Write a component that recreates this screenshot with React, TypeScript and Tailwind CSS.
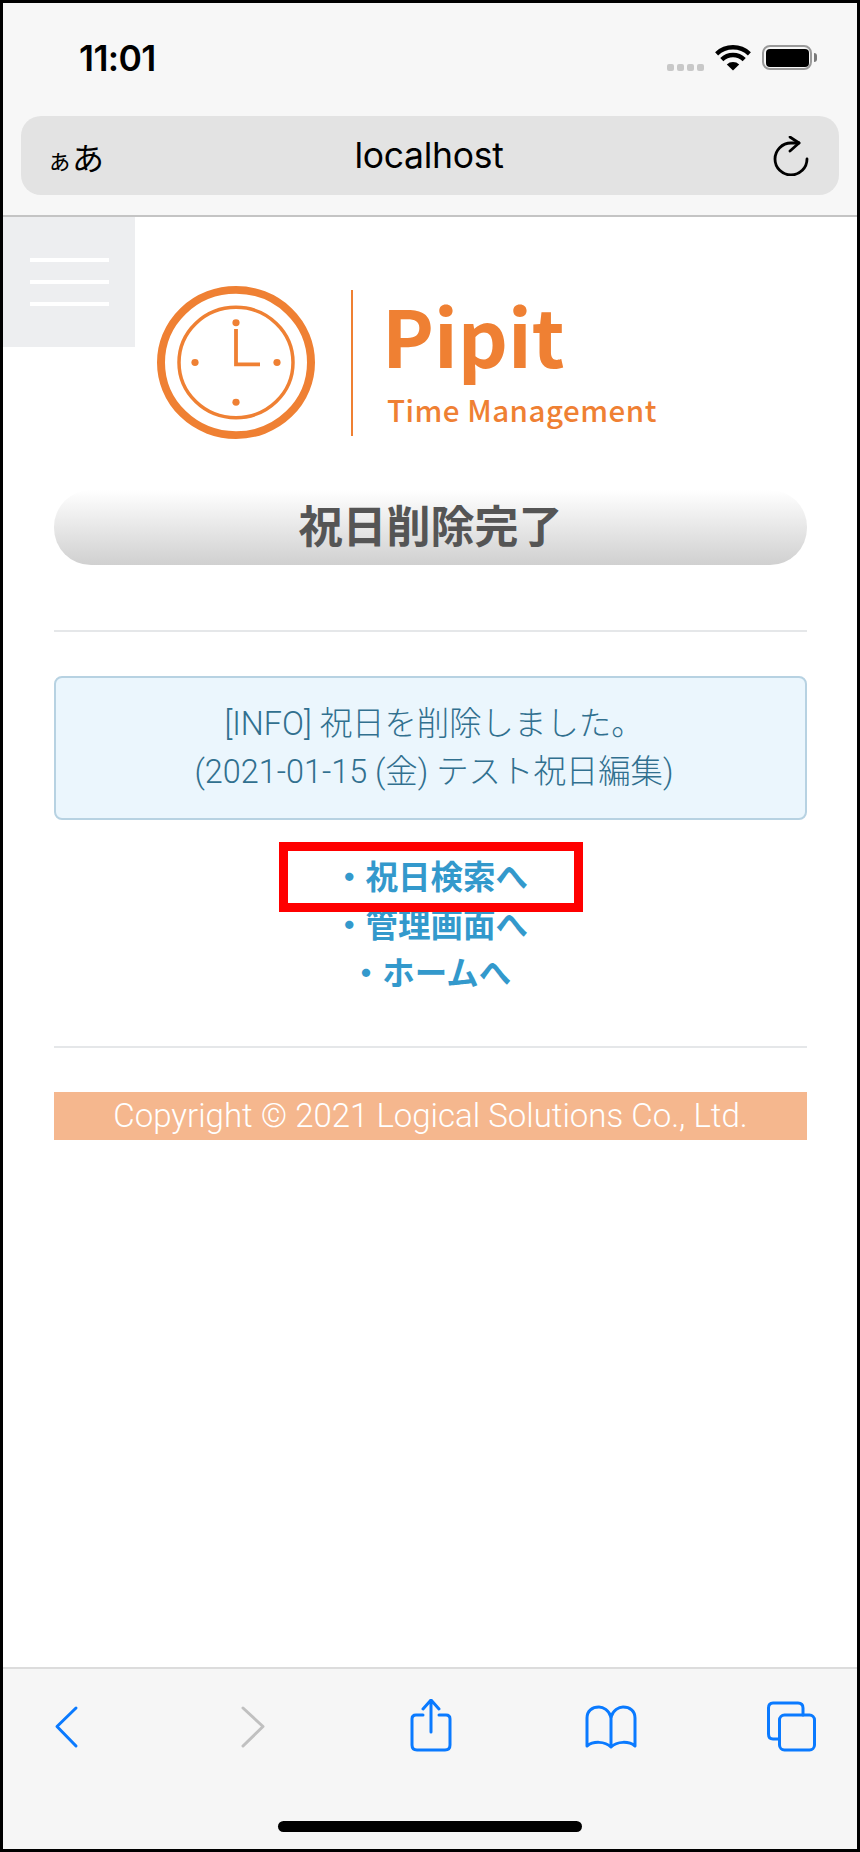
import React from "react";

const cjk = "font-['Liberation_Sans','Noto_Sans_CJK_JP',sans-serif]";
const thin = "font-['Roboto','Noto_Sans_CJK_JP',sans-serif] font-light";

function ClockLogo() {
  return (
    <svg width="158" height="153" viewBox="0 0 158 158" preserveAspectRatio="none" fill="none" stroke="#ef8033" className="shrink-0">
      <circle cx="79" cy="79" r="75" strokeWidth="8" />
      <circle cx="79" cy="79" r="57" strokeWidth="3.5" />
      <circle cx="79" cy="38" r="3.6" fill="#ef8033" stroke="none" />
      <circle cx="79" cy="120" r="3.6" fill="#ef8033" stroke="none" />
      <circle cx="38" cy="79" r="3.6" fill="#ef8033" stroke="none" />
      <circle cx="120" cy="79" r="3.6" fill="#ef8033" stroke="none" />
      <path d="M79 44.5V81H103" strokeWidth="3.8" />
    </svg>
  );
}

function StatusBar() {
  return (
    <div className="flex h-[113px] items-start justify-between pl-[76px] pr-[40px]">
      <span className="mt-[36px] font-['Inter',sans-serif] text-[35.5px] leading-[40px] font-semibold tracking-[-0.6px] text-black">11:01</span>
      <div className="mt-[42px] flex items-start">
        <div className="mt-[19px] flex gap-[3px]">
          <span className="h-[7px] w-[7px] rounded-[2px] bg-[#c8c8c8]" />
          <span className="h-[7px] w-[7px] rounded-[2px] bg-[#c8c8c8]" />
          <span className="h-[7px] w-[7px] rounded-[2px] bg-[#c8c8c8]" />
          <span className="h-[7px] w-[7px] rounded-[2px] bg-[#c8c8c8]" />
        </div>
        <svg width="36" height="26" viewBox="0 0 36 26" className="ml-[11px]">
          <path d="M18 25.5 11.8 19.6a9 9 0 0 1 12.4 0Z" fill="#000" />
          <path d="M6.8 14.6a16 16 0 0 1 22.4 0" stroke="#000" strokeWidth="4.4" fill="none" />
          <path d="M1.6 8.8a24 24 0 0 1 32.8 0" stroke="#000" strokeWidth="4.4" fill="none" />
        </svg>
        <div className="ml-[11px] flex h-[25px] w-[50px] rounded-[8px] border-[2.5px] border-[#9a9a9a] p-[1.5px]">
          <div className="h-full w-full rounded-[4px] bg-black" />
        </div>
        <div className="ml-[2px] mt-[8px] h-[9px] w-[3px] rounded-r-[3px] bg-[#7a7a7a]" />
      </div>
    </div>
  );
}

function AddressBar() {
  return (
    <div className="mx-[18px] grid h-[79px] grid-cols-[1fr_auto_1fr] items-center rounded-[20px] bg-[#e3e3e3] pl-[26px] pr-[28px] text-black">
      <span className="font-['Noto_Sans_CJK_JP',sans-serif] text-[32px] leading-none">
        <span className="text-[25px]">ぁ</span>あ
      </span>
      <span className="font-['Inter',sans-serif] text-[35.5px] leading-none tracking-[-0.3px]">localhost</span>
      <svg width="40" height="40" viewBox="0 0 40 40" fill="none" stroke="#000" strokeWidth="2.8" strokeLinecap="round" strokeLinejoin="round" className="justify-self-end">
        <path d="M28 7H20A16 16 0 1 0 36 23" />
        <path d="M19 1 28 7 19 15" />
      </svg>
    </div>
  );
}

function Toolbar() {
  return (
    <div className="flex h-[182px] shrink-0 flex-col border-t-2 border-[#dcdcdc] bg-[#f6f6f6]">
      <div className="flex h-[152px] items-start">
        <svg width="860" height="60" viewBox="0 0 860 60" fill="none" strokeWidth="3" strokeLinecap="round" strokeLinejoin="round" className="-ml-[3px] mt-[30px] shrink-0">
          <path d="M76 9 57 27.5 76 47" stroke="#0a7aff" />
          <path d="M243 9 263 27.5 243 47" stroke="#c0c0c0" />
          <g stroke="#0a7aff">
            <path d="M431 2V33M423 10 431 1 439 10" />
            <path d="M423 16H416Q412 16 412 20V46Q412 51 417 51H445Q450 51 450 46V20Q450 16 446 16H439" />
          </g>
          <g stroke="#0a7aff">
            <path d="M611 18V47" />
            <path d="M611 18C609 11 603 8 599 8 592 8 587 12 587 19V47C593 42 605 42 611 48 617 42 629 42 635 47V19C635 12 630 8 623 8 619 8 613 11 611 18Z" />
          </g>
          <g stroke="#0a7aff">
            <rect x="779.5" y="16" width="35" height="35" rx="5" />
            <path d="M779 40H773Q768.5 40 768.5 35V9Q768.5 4 773 4H798Q803 4 803 9V16" />
          </g>
        </svg>
      </div>
      <div className="mx-auto h-[11px] w-[304px] rounded-full bg-black" />
    </div>
  );
}

function Links() {
  return (
    <div className="mt-[34px] flex flex-col items-center text-[32.5px] leading-[48px] font-bold text-[#3399cc]">
      <div className="relative w-[304px] text-center">
        <span>・祝日検索へ</span>
        <div className="absolute -top-[12px] left-0 h-[70px] w-[304px] border-[9px] border-[#ff0000]" />
      </div>
      <span>・管理画面へ</span>
      <span>・ホームへ</span>
    </div>
  );
}

export default function App() {
  return (
    <div className={`flex h-[1852px] w-[860px] flex-col border-[3px] border-black bg-white ${cjk}`}>
      <div className="h-[214px] shrink-0 border-b-2 border-[#c4c4c4] bg-[#f7f7f7]">
        <StatusBar />
        <AddressBar />
      </div>

      <main className="relative flex-1 pl-[51px] pr-[50px]">
        <div className="absolute left-0 top-0 flex h-[130px] w-[132px] flex-col items-center justify-center gap-[18px] bg-[#edeef0]">
          <span className="h-[4px] w-[79px] bg-white" />
          <span className="h-[4px] w-[79px] bg-white" />
          <span className="h-[4px] w-[79px] bg-white" />
        </div>

        <div className="flex h-[273px] items-start pl-[103px] pt-[69px]">
          <ClockLogo />
          <div className="ml-[36px] mt-[4px] h-[146px] w-[2px] bg-[#ef8033]" />
          <div className="ml-[29px] font-['Noto_Sans_CJK_JP',sans-serif] font-bold text-[#ef8033]">
            <div className="mt-[3px] text-[78px] leading-[90px]">Pipit</div>
            <div className="mt-[13px] ml-[5px] text-[29.5px] leading-[34px] font-medium tracking-[0.5px]">Time Management</div>
          </div>
        </div>

        <h1 className="flex h-[75px] items-center justify-center rounded-[37px] bg-linear-to-b from-white to-[#d0d0d0] text-[44px] font-bold text-[#555555]">
          祝日削除完了
        </h1>

        <hr className="mt-[65px] border-t-2 border-[#e5e7e9]" />

        <div className={`mt-[44px] flex h-[144px] flex-col items-center justify-center rounded-[8px] border-2 border-[#b7d2e2] bg-[#ebf6fd] pl-[7px] text-[32.4px] leading-[48px] text-[#31708f] ${thin}`}>
          <p>[INFO] 祝日を削除しました。</p>
          <p>(2021-01-15 (金) テスト祝日編集)</p>
        </div>

        <Links />

        <hr className="mt-[48px] border-t-2 border-[#e5e7e9]" />

        <footer className={`mt-[44px] flex h-[48px] items-center justify-center bg-[#f5b78e] text-[33px] text-white ${thin}`}>
          Copyright © 2021 Logical Solutions Co., Ltd.
        </footer>
      </main>

      <Toolbar />
    </div>
  );
}
